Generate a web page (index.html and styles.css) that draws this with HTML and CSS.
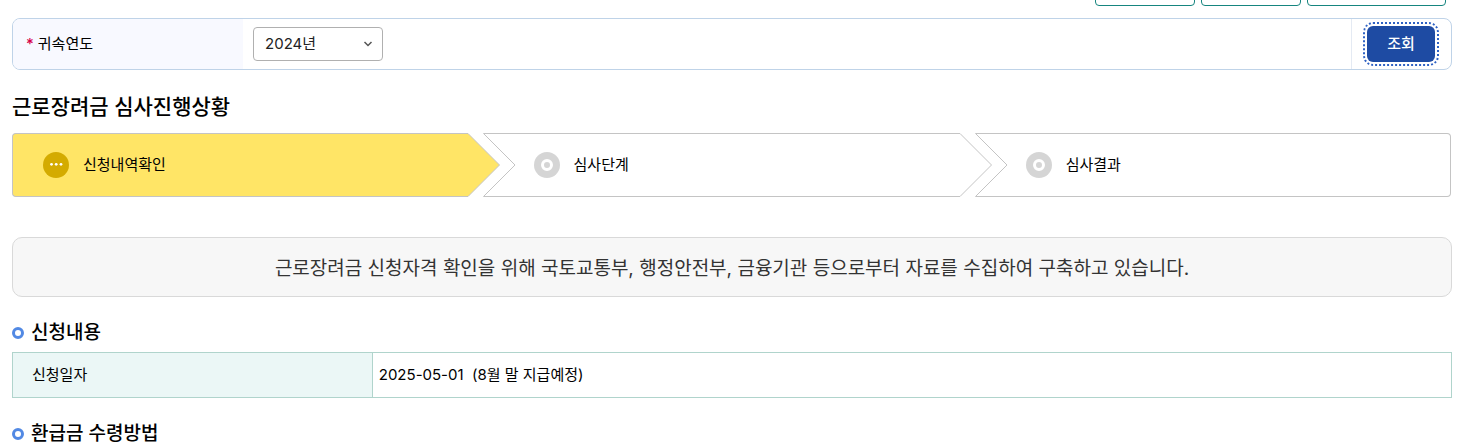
FILE: index.html
```html
<!DOCTYPE html>
<html lang="ko">
<head>
    <meta charset="UTF-8">
    <meta name="viewport" content="width=device-width, initial-scale=1.0">
    <title>근로장려금 심사진행상황</title>
    <link rel="stylesheet" href="styles.css">
</head>
<body>
    <div class="container">
        <div class="toolbar">
            <button type="button" class="tool-button"></button>
            <button type="button" class="tool-button"></button>
            <button type="button" class="tool-button wide"></button>
        </div>

        <!-- Search -->
        <form class="search">
            <label class="search-label" for="year"><span class="required">*</span>귀속연도</label>
            <div class="search-field">
                <select id="year" class="year-select">
                    <option>2024년</option>
                </select>
                <svg class="select-arrow" viewBox="0 0 10 6"><path d="M1.5 1 L5 4.5 L8.5 1" fill="none" stroke="#555" stroke-width="1.5"/></svg>
            </div>
            <div class="search-action">
                <button type="button" class="search-button">조회</button>
            </div>
        </form>

        <h2>근로장려금 심사진행상황</h2>

        <!-- Progress steps -->
        <ol class="steps">
            <li class="step active">
                <div class="step-body">
                    <svg class="step-icon" viewBox="0 0 26 26">
                        <circle cx="13" cy="13" r="13" fill="#d4ab00"/>
                        <circle cx="8.5" cy="12.3" r="1.4" fill="#fff"/>
                        <circle cx="13.2" cy="12.3" r="1.4" fill="#fff"/>
                        <circle cx="18" cy="12.3" r="1.4" fill="#fff"/>
                    </svg>
                    <span>신청내역확인</span>
                </div>
                <svg class="step-edge" viewBox="0 0 32 64"><path d="M0 .5 L31.5 32 L0 63.5" fill="#ffe566" stroke="#c4c4c4"/></svg>
            </li>
            <li class="step">
                <svg class="step-edge" viewBox="0 0 32 64"><path d="M32 .5 H.5 L32 32 L.5 63.5 H32" fill="none" stroke="#c4c4c4"/></svg>
                <div class="step-body">
                    <svg class="step-icon" viewBox="0 0 26 26">
                        <circle cx="13" cy="13" r="13" fill="#d5d5d5"/>
                        <circle cx="13" cy="13" r="4.5" fill="none" stroke="#fff" stroke-width="3"/>
                    </svg>
                    <span>심사단계</span>
                </div>
                <svg class="step-edge" viewBox="0 0 32 64"><path d="M0 .5 L31.5 32 L0 63.5" fill="none" stroke="#c4c4c4"/></svg>
            </li>
            <li class="step">
                <svg class="step-edge" viewBox="0 0 32 64"><path d="M32 .5 H.5 L32 32 L.5 63.5 H32" fill="none" stroke="#c4c4c4"/></svg>
                <div class="step-body">
                    <svg class="step-icon" viewBox="0 0 26 26">
                        <circle cx="13" cy="13" r="13" fill="#d5d5d5"/>
                        <circle cx="13" cy="13" r="4.5" fill="none" stroke="#fff" stroke-width="3"/>
                    </svg>
                    <span>심사결과</span>
                </div>
            </li>
        </ol>

        <p class="notice">근로장려금 신청자격 확인을 위해 국토교통부, 행정안전부, 금융기관 등으로부터 자료를 수집하여 구축하고 있습니다.</p>

        <h3>신청내용</h3>
        <table class="info">
            <tr>
                <th scope="row">신청일자</th>
                <td>2025-05-01&nbsp; (8월 말 지급예정)</td>
            </tr>
        </table>

        <h3>환급금 수령방법</h3>
    </div>
</body>
</html>
```
FILE: styles.css
```css
*,
*::before {
    box-sizing: border-box;
}
body {
    margin: 0;
    font-family: Inter, "Noto Sans CJK KR", sans-serif;
    font-size: 15px;
    line-height: 24px;
    color: #000;
    background: #fff;
}
.container {
    padding: 0 13px 0 12px;
}
.toolbar {
    display: flex;
    justify-content: flex-end;
    align-items: flex-end;
    gap: 6px;
    height: 6px;
    padding-right: 6px;
    overflow: hidden;
}
.tool-button {
    flex: none;
    width: 100px;
    height: 34px;
    border: 1px solid #16857f;
    border-radius: 4px;
    background: #fff;
}
.tool-button.wide {
    width: 139px;
}
.search {
    display: flex;
    height: 52px;
    margin-top: 12px;
    border: 1px solid #bfd3e8;
    border-radius: 8px;
    overflow: hidden;
}
.search-label {
    display: flex;
    align-items: center;
    width: 16%;
    padding-left: 13px;
    background: #f8f9ff;
}
.required {
    margin-right: 4px;
    color: #d6004b;
    font-weight: 500;
}
.search-field {
    display: flex;
    flex: 1;
    align-items: center;
    padding-left: 10px;
}
.year-select {
    width: 130px;
    height: 34px;
    padding: 0 11px;
    border: 1px solid #b0b0b0;
    border-radius: 4px;
    appearance: none;
    background: #fff;
    font: inherit;
    color: #222;
}
.select-arrow {
    width: 10px;
    height: 6px;
    margin-left: -20px;
    pointer-events: none;
}
.search-action {
    display: flex;
    align-items: center;
    padding: 0 16px 0 15px;
    border-left: 1px solid #e4eaf3;
}
.search-button {
    width: 68px;
    height: 36px;
    padding: 0;
    border: 0;
    border-radius: 6px;
    outline: 2px dotted #2f62c4;
    outline-offset: 2px;
    background: #1e4ba3;
    color: #fff;
    font: inherit;
    font-weight: 500;
}
h2 {
    margin: 21px 0 10px;
    font-size: 21px;
    font-weight: 500;
    line-height: 32px;
}
.steps {
    display: grid;
    grid-template-columns: 32.7% 34.2% 1fr;
    margin: 0;
    padding: 0 1px 0 0;
    list-style: none;
}
.step {
    display: flex;
    height: 64px;
}
/* the arrow tip reaches into the notch of the next step */
.step:not(:last-child) {
    margin-right: -17px;
}
.step-body {
    display: flex;
    flex: 1;
    align-items: center;
    gap: 14px;
    padding-left: 19px;
    border: solid #c4c4c4;
    border-width: 1px 0;
}
.step.active .step-body {
    padding-left: 30px;
    border-left-width: 1px;
    border-radius: 4px 0 0 4px;
    background: #ffe566;
}
.step:last-child .step-body {
    border-right-width: 1px;
    border-radius: 0 4px 4px 0;
}
.step-edge {
    flex: none;
    width: 32px;
    height: 64px;
}
.step-icon {
    width: 26px;
    height: 26px;
}
.notice {
    margin: 40px 0 21px;
    padding: 16px 20px 12px;
    border: 1px solid #d9d9d9;
    border-radius: 10px;
    background: #f7f7f7;
    color: #333;
    font-size: 19px;
    line-height: 30px;
    text-align: center;
}
h3 {
    display: flex;
    align-items: center;
    gap: 7px;
    margin: 21px 0 4px;
    font-size: 19px;
    font-weight: 500;
    line-height: 30px;
}
h3::before {
    content: "";
    width: 12px;
    height: 12px;
    border: 3px solid #5289e4;
    border-radius: 50%;
}
.info {
    width: 100%;
    height: 46px;
    border-collapse: collapse;
}
.info th,
.info td {
    padding: 0 6px;
    border: 1px solid #b0d4cc;
    text-align: left;
}
.info th {
    width: 25%;
    padding-left: 19px;
    background: #ebf7f6;
    font-weight: 400;
}
```
